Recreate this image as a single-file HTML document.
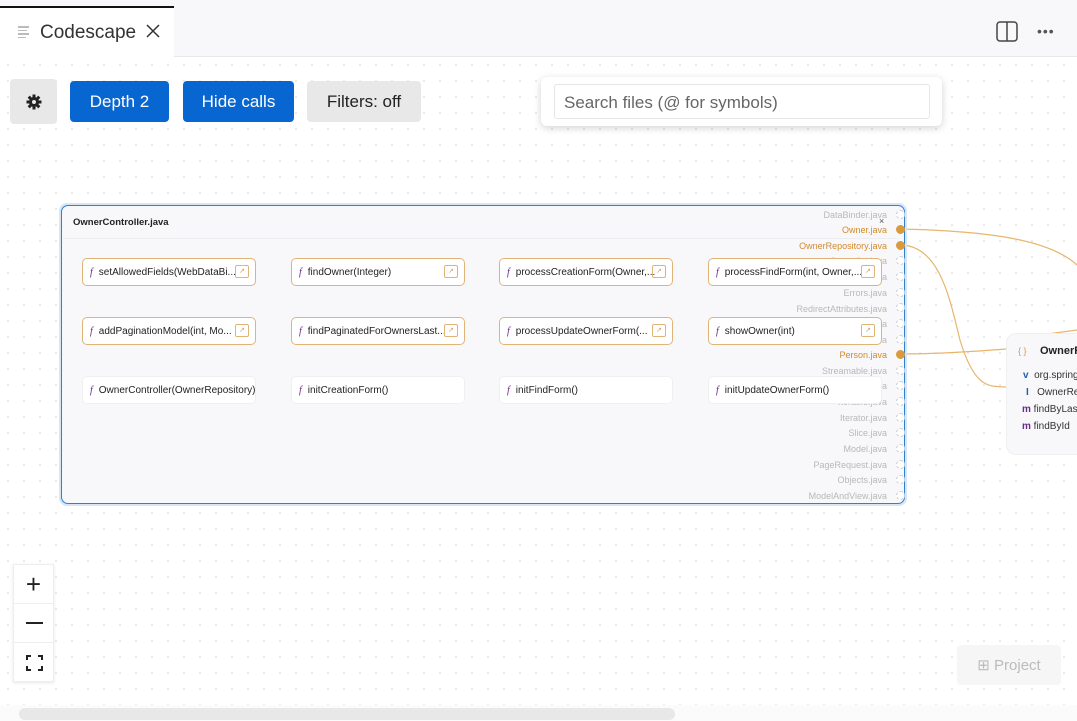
<!DOCTYPE html>
<html><head><meta charset="utf-8"><style>
*{box-sizing:border-box;margin:0;padding:0}
html,body{width:1077px;height:721px;overflow:hidden}
body{position:relative;background:#fff;font-family:"Liberation Sans",sans-serif;color:#1f1f1f}
.abs{position:absolute}
.grid{position:absolute;left:0;top:57px;width:1077px;height:664px;background-image:radial-gradient(circle,#e4e4e4 0.8px,transparent 1px);background-size:16px 16px}
.btn{position:absolute;top:81px;height:41px;border-radius:4px;font-size:17px;display:flex;align-items:center;justify-content:center}
.blue{background:#0866d0;color:#fff}
.gray{background:#e8e8e8;color:#222}
.m{position:absolute;height:28px;width:174px;border-radius:5px;background:#fff;font-size:10px;display:flex;align-items:center;padding-left:7px;white-space:nowrap;color:#222}
.m.o{border:1px solid #e0b477}
.m.p{border:1px solid #f0f0f0}
.m i{font-family:"Liberation Serif",serif;color:#6a2b8a;font-style:italic;margin-right:6px;font-size:10px}
.m b{position:absolute;right:6px;top:6px;width:14px;height:13px;border:1px solid #e0b477;border-radius:2px;font-weight:normal;font-size:7px;color:#d9a25e;text-align:center;line-height:11px}
.lb{position:absolute;right:190px;font-size:9px;color:#b8b8b8;text-align:right;white-space:nowrap}
.lb.or{color:#d4892a}
.pin{position:absolute;left:896px;width:9px;height:9px;border-radius:50%;border:1px dashed #c7ccd4;background:#fff}
.pin.or{background:#d99a3e;border:1px solid #d99a3e}
.node{position:absolute;left:1006px;top:333px;width:71px;height:122px;overflow:hidden;border-radius:10px 0 0 10px;background:#f8f8fa;border:1px solid #efefef;border-right:none}
.node div{position:absolute;white-space:nowrap;font-size:10px;color:#333}
</style></head><body>
<div class="abs" style="left:0;top:0;width:1077px;height:57px;background:#f8f8fa;border-bottom:1px solid #e8e8e8"></div>
<div class="abs" style="left:0;top:6px;width:174px;height:52px;background:#fff;border-top:2px solid #111"></div>
<div class="abs" style="left:18px;top:26px;width:12px;height:12px">
<div style="height:1.5px;background:#bbb;width:11px;margin-bottom:2px"></div><div style="height:1.5px;background:#bbb;width:9px;margin-bottom:2px"></div><div style="height:1.5px;background:#bbb;width:11px;margin-bottom:2px"></div><div style="height:1.5px;background:#bbb;width:8px"></div></div>
<div class="abs" style="left:40px;top:22px;font-size:19px;color:#333">Codescape</div>
<svg class="abs" style="left:146px;top:24px" width="14" height="14"><path d="M1 1L13 13M13 1L1 13" stroke="#333" stroke-width="1.5"/></svg>
<svg class="abs" style="left:996px;top:21px" width="22" height="21"><rect x="1" y="1" width="20" height="19" rx="3" fill="none" stroke="#444" stroke-width="1.5"/><path d="M11 1V20" stroke="#444" stroke-width="1.5"/></svg>
<div class="abs" style="left:1037px;top:29px;font-size:14px;color:#555;letter-spacing:1px;line-height:4px">•••</div>

<div class="grid"></div>

<div class="btn gray" style="left:10px;width:47px;height:45px;top:79px"><svg width="16" height="16" viewBox="0 0 16 16"><g fill="#222"><circle cx="8" cy="8" r="5"/><rect x="6.5" y="0.5" width="3" height="15"/><rect x="0.5" y="6.5" width="15" height="3"/><rect x="6.5" y="0.5" width="3" height="15" transform="rotate(45 8 8)"/><rect x="6.5" y="0.5" width="3" height="15" transform="rotate(-45 8 8)"/></g><circle cx="8" cy="8" r="2" fill="#e8e8e8"/></svg></div>
<div class="btn blue" style="left:70px;width:99px">Depth 2</div>
<div class="btn blue" style="left:183px;width:111px">Hide calls</div>
<div class="btn gray" style="left:307px;width:114px">Filters: off</div>

<div class="abs" style="left:541px;top:77px;width:401px;height:49px;background:#fff;border-radius:6px;box-shadow:0 2px 8px rgba(0,0,0,.18)"></div>
<div class="abs" style="left:554px;top:84px;width:376px;height:35px;border:1px solid #e6e6e6;border-radius:3px;font-size:17px;color:#666;padding:8px 9px">Search files (@ for symbols)</div>

<svg class="abs" style="left:0;top:0" width="1077" height="721">
<path d="M900 229 C990 231,1050 240,1077 265" stroke="#e8b56c" fill="none" stroke-width="1.2"/>
<path d="M900 245 C940 245,950 300,960 340 C975 390,990 386,1006 387" stroke="#e8b56c" fill="none" stroke-width="1.2"/>
<path d="M900 354 C950 354,990 350,1006 349 M1040 335 L1077 330" stroke="#e8b56c" fill="none" stroke-width="1.2"/>
</svg>

<div class="abs" style="left:59px;top:203px;width:848px;height:303px;border-radius:8px;border:3px solid #d6e6f6"></div>
<div class="abs" style="left:61px;top:205px;width:844px;height:299px;border-radius:7px;border:1.5px solid #2f80d0;background:#f8f8fb"></div>
<div class="abs" style="left:63px;top:238px;width:835px;height:1px;background:#eeeef2"></div>
<div class="abs" style="left:73px;top:217px;font-size:9.5px;font-weight:bold;color:#222">OwnerController.java</div>
<div class="abs" style="left:879px;top:216px;font-size:9px;color:#555">×</div>

<div class="lb" style="top:210px">DataBinder.java</div>
<div class="lb or" style="top:225px">Owner.java</div>
<div class="lb or" style="top:241px">OwnerRepository.java</div>
<div class="lb" style="top:256px">Controller.java</div>
<div class="lb" style="top:272px">BindingResult.java</div>
<div class="lb" style="top:288px">Errors.java</div>
<div class="lb" style="top:304px">RedirectAttributes.java</div>
<div class="lb" style="top:319px">Valid.java</div>
<div class="lb" style="top:335px">List.java</div>
<div class="lb or" style="top:350px">Person.java</div>
<div class="lb" style="top:366px">Streamable.java</div>
<div class="lb" style="top:381px">Collection.java</div>
<div class="lb" style="top:397px">Iterable.java</div>
<div class="lb" style="top:413px">Iterator.java</div>
<div class="lb" style="top:428px">Slice.java</div>
<div class="lb" style="top:444px">Model.java</div>
<div class="lb" style="top:460px">PageRequest.java</div>
<div class="lb" style="top:475px">Objects.java</div>
<div class="lb" style="top:491px">ModelAndView.java</div>

<div class="m o" style="left:82px;top:258px"><i>f</i>setAllowedFields(WebDataBi...<b>↗</b></div>
<div class="m o" style="left:291px;top:258px"><i>f</i>findOwner(Integer)<b>↗</b></div>
<div class="m o" style="left:499px;top:258px"><i>f</i>processCreationForm(Owner,...<b>↗</b></div>
<div class="m o" style="left:708px;top:258px"><i>f</i>processFindForm(int, Owner,...<b>↗</b></div>
<div class="m o" style="left:82px;top:317px"><i>f</i>addPaginationModel(int, Mo...<b>↗</b></div>
<div class="m o" style="left:291px;top:317px"><i>f</i>findPaginatedForOwnersLast...<b>↗</b></div>
<div class="m o" style="left:499px;top:317px"><i>f</i>processUpdateOwnerForm(...<b>↗</b></div>
<div class="m o" style="left:708px;top:317px"><i>f</i>showOwner(int)<b>↗</b></div>
<div class="m p" style="left:82px;top:376px"><i>f</i>OwnerController(OwnerRepository)</div>
<div class="m p" style="left:291px;top:376px"><i>f</i>initCreationForm()</div>
<div class="m p" style="left:499px;top:376px"><i>f</i>initFindForm()</div>
<div class="m p" style="left:708px;top:376px"><i>f</i>initUpdateOwnerForm()</div>

<div class="pin" style="top:210px"></div>
<div class="pin or" style="top:225px"></div>
<div class="pin or" style="top:241px"></div>
<div class="pin" style="top:256px"></div><div class="pin" style="top:272px"></div>
<div class="pin" style="top:288px"></div><div class="pin" style="top:303px"></div>
<div class="pin" style="top:319px"></div><div class="pin" style="top:335px"></div>
<div class="pin or" style="top:350px"></div>
<div class="pin" style="top:366px"></div><div class="pin" style="top:381px"></div>
<div class="pin" style="top:397px"></div><div class="pin" style="top:413px"></div>
<div class="pin" style="top:428px"></div><div class="pin" style="top:444px"></div>
<div class="pin" style="top:460px"></div><div class="pin" style="top:475px"></div>
<div class="pin" style="top:491px"></div>

<div class="node">
<div style="left:11px;top:12px;font-size:9px;color:#d99a3e">{ }</div>
<div style="left:33px;top:11px;font-size:11px;font-weight:bold;color:#222">OwnerRepository</div>
<div style="left:16px;top:36px"><b style="color:#1e5fb0">v</b>&nbsp; org.springframework</div>
<div style="left:19px;top:53px"><b style="color:#1e5fb0">I</b>&nbsp;&nbsp; OwnerRepository</div>
<div style="left:15px;top:70px"><b style="color:#6a2b8a">m</b>&nbsp;findByLastName</div>
<div style="left:15px;top:87px"><b style="color:#6a2b8a">m</b>&nbsp;findById</div>
</div>

<div class="abs" style="left:13px;top:564px;width:41px;height:118px;background:#fff;border:1px solid #eee;box-shadow:0 1px 3px rgba(0,0,0,.1)">
<div style="height:39px;border-bottom:1px solid #eee;font-size:26px;text-align:center;line-height:38px;color:#222">+</div>
<div style="height:39px;border-bottom:1px solid #eee;position:relative"><div style="position:absolute;left:12px;top:18px;width:17px;height:2px;background:#222"></div></div>
<div style="height:39px;position:relative"><svg style="position:absolute;left:12px;top:12px" width="17" height="16"><path d="M1 5V1H5M12 1H16V5M16 11V15H12M5 15H1V11" stroke="#222" stroke-width="2" fill="none"/></svg></div>
</div>

<div class="abs" style="left:957px;top:645px;width:104px;height:40px;background:#f6f6f6;border-radius:4px;color:#bbb;font-size:15px;display:flex;align-items:center;justify-content:center">⊞ Project</div>

<div class="abs" style="left:0;top:705px;width:1077px;height:16px;background:#fbfbfb"></div>
<div class="abs" style="left:19px;top:708px;width:656px;height:12px;border-radius:6px;background:#e8e8e8"></div>
</body></html>
